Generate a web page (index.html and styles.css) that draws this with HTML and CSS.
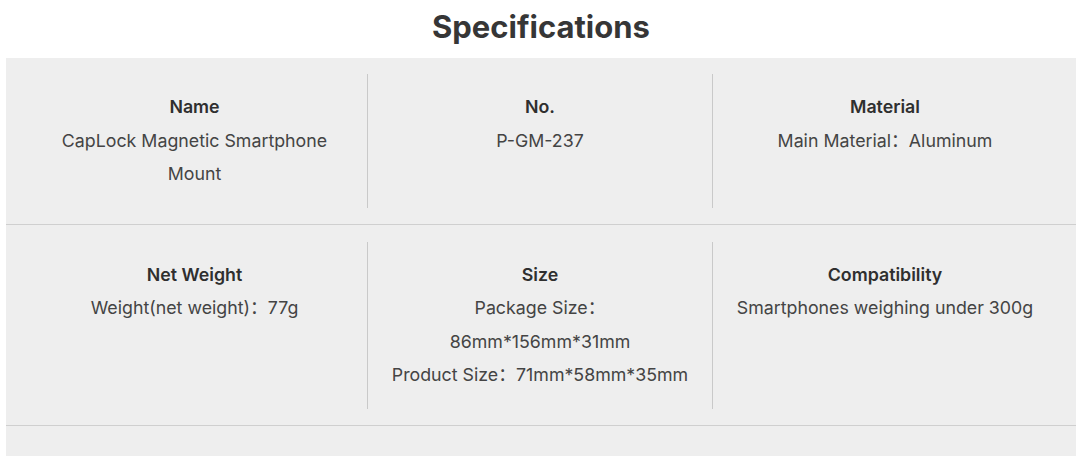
FILE: index.html
```html
<!DOCTYPE html>
<html>
<head>
<meta charset="utf-8">
<link rel="stylesheet" href="styles.css">
</head>
<body>
<div class="page">
  <h2 class="title">Specifications</h2>
  <div class="specs">
    <div class="row">
      <div class="cell">
        <div class="label">Name</div>
        <div class="value">CapLock Magnetic Smartphone Mount</div>
      </div>
      <div class="cell">
        <div class="label">No.</div>
        <div class="value">P-GM-237</div>
      </div>
      <div class="cell">
        <div class="label">Material</div>
        <div class="value">Main Material：Aluminum</div>
      </div>
    </div>
    <div class="row">
      <div class="cell">
        <div class="label">Net Weight</div>
        <div class="value">Weight(net weight)：77g</div>
      </div>
      <div class="cell">
        <div class="label">Size</div>
        <div class="value">Package Size：<br>86mm*156mm*31mm<br><span class="nw">Product Size：71mm*58mm*35mm</span></div>
      </div>
      <div class="cell">
        <div class="label">Compatibility</div>
        <div class="value">Smartphones weighing under 300g</div>
      </div>
    </div>
    <div class="tail"></div>
  </div>
</div>
</body>
</html>
```
FILE: styles.css
```css
html, body {
  margin: 0;
  padding: 0;
  background: #ffffff;
}
body {
  font-family: Inter, "Noto Sans CJK SC", sans-serif;
  color: #3a3a3a;
}
.page {
  padding: 0 4px 0 6px;
}
.title {
  margin: 0;
  height: 58px;
  line-height: 54px;
  text-align: center;
  font-size: 31px;
  font-weight: 700;
  color: #363636;
}
.specs {
  background: #eeeeee;
}
.row {
  display: grid;
  grid-template-columns: repeat(3, 1fr);
  padding: 16px 19px 16px 16px;
  border-bottom: 1px solid #cfcfcf;
}
.row + .row {
  padding-top: 17px;
}
.cell {
  padding: 16px 16px 17px;
  text-align: center;
  line-height: 33.5px;
  font-size: 17.8px;
  border-left: 1px solid #c9c9c9;
}
.cell:first-child {
  border-left: none;
}
.label {
  font-weight: 600;
  color: #2f2f2f;
}
.value {
  color: #444444;
}
.nw {
  white-space: nowrap;
}
.tail {
  height: 31px;
}
```
